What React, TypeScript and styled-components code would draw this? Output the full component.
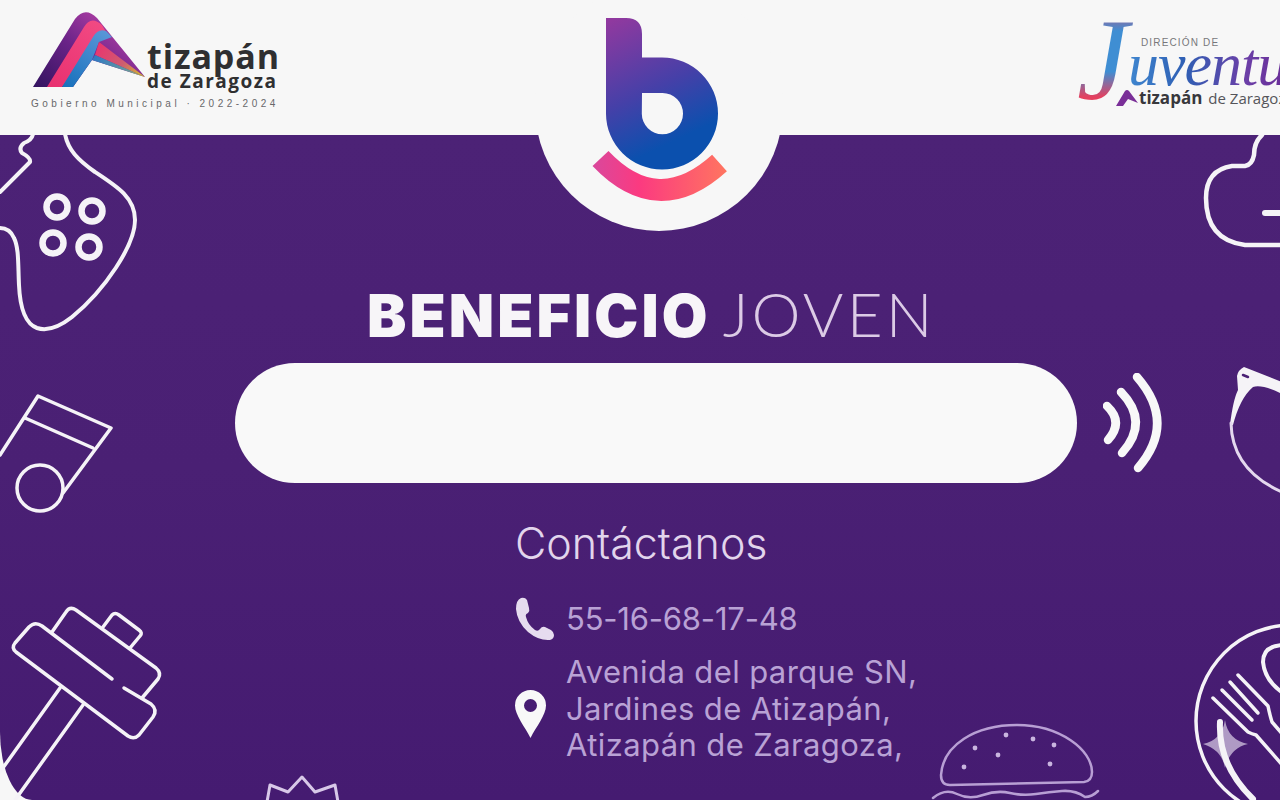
import React from "react";
import styled, { createGlobalStyle } from "styled-components";

const GlobalStyle = createGlobalStyle`
  html, body {
    margin: 0;
    padding: 0;
    background: #f7f7f7;
  }
`;

const Page = styled.div`
  position: relative;
  width: 1280px;
  height: 800px;
  overflow: hidden;
  background: #f7f7f7;
  font-family: "Inter", "Liberation Sans", sans-serif;
`;

// header
const Header = styled.header`
  position: relative;
  z-index: 2;
  display: flex;
  justify-content: space-between;
  height: 135px;
`;
const CityLogo = styled.div`
  display: flex;
  flex-direction: column;
  width: 250px;
  margin-left: 31px;
  padding-top: 11px;
`;
const CityRow = styled.div`
  display: flex;
  gap: 2px;
`;
const CityMark = styled.svg`
  flex: none;
  margin-left: 2px;
`;
const CityName = styled.div`
  display: flex;
  flex-direction: column;
  padding-top: 29px;
  color: #2f2f31;
  font-family: "Open Sans", sans-serif;
  font-weight: 700;
  white-space: nowrap;
`;
const CityTitle = styled.span`
  font-size: 34px;
  line-height: 32px;
  letter-spacing: 0.9px;
`;
const CitySub = styled.span`
  font-size: 19px;
  line-height: 18px;
  letter-spacing: 1.5px;
`;
const CityTag = styled.span`
  margin-top: 8px;
  color: #68686a;
  font-family: "Liberation Sans", sans-serif;
  font-size: 10px;
  line-height: 12px;
  letter-spacing: 3.5px;
  white-space: nowrap;
`;
const Notch = styled.div`
  position: absolute;
  top: -17px;
  left: 535px;
  box-sizing: border-box;
  width: 248px;
  height: 248px;
  padding: 34px 0 0 55px;
  border-radius: 50%;
  background: #f7f7f7;
`;
const YouthLogo = styled.div`
  position: relative;
  width: 202px;
  height: 135px;
  overflow: hidden;
`;
const YouthLabel = styled.span`
  position: absolute;
  top: 37px;
  left: 63px;
  color: #77777b;
  font-family: "Liberation Sans", sans-serif;
  font-size: 10px;
  line-height: 12px;
  letter-spacing: 1.15px;
`;
const YouthInitial = styled.span`
  position: absolute;
  top: 2px;
  left: -1px;
  padding-right: 24px;
  font-family: "Liberation Serif", serif;
  font-size: 116px;
  font-style: italic;
  line-height: 116px;
  background: linear-gradient(180deg, #e2476a 0%, #3f8ed3 25%, #3f8ed3 60%, #e5405f 82%);
  background-clip: text;
  color: transparent;
`;
const YouthWord = styled.span`
  position: absolute;
  top: 33px;
  left: 50px;
  font-family: "Liberation Serif", serif;
  font-size: 62px;
  font-style: italic;
  line-height: 62px;
  letter-spacing: -1px;
  white-space: nowrap;
  background: linear-gradient(90deg, #3f86cf 0%, #2f5fb4 30%, #6b3fa7 62%, #6a2f99 82%, #4aa34a 96%);
  background-clip: text;
  color: transparent;
`;
const YouthCity = styled.div`
  position: absolute;
  top: 88px;
  left: 38px;
  display: flex;
  align-items: center;
  gap: 1px;
  color: #38383c;
  font-family: "Open Sans", sans-serif;
  font-size: 17px;
  line-height: 20px;
  white-space: nowrap;
`;
const YouthCityBold = styled.b`
  font-weight: 700;
  margin-right: 5px;
`;
const YouthCityLight = styled.span`
  font-size: 15px;
  color: #55555a;
`;

// main
const Main = styled.main`
  position: relative;
  height: 665px;
  background: linear-gradient(180deg, #4c2276 0%, #4a2074 50%, #451b71 100%);
  border-bottom-left-radius: 32px 68px;
`;
const Doodles = styled.svg`
  position: absolute;
  top: 0;
  left: 0;
`;
const Content = styled.div`
  position: relative;
  display: flex;
  flex-direction: column;
  padding: 141px 0 0 235px;
`;
const Title = styled.h1`
  display: flex;
  gap: 12px;
  align-items: baseline;
  margin: 0 0 0 132px;
  color: #f7f5f8;
  font-family: "Inter", sans-serif;
  font-size: 59px;
  font-weight: 900;
  line-height: 74px;
  letter-spacing: 3.1px;
  white-space: nowrap;
`;
const TitleLight = styled.span`
  color: #dccbe6;
  font-family: "Lato", sans-serif;
  font-weight: 300;
  font-size: 62px;
  letter-spacing: 3.2px;
`;
const CardRow = styled.div`
  display: flex;
  align-items: center;
  gap: 26px;
  margin-top: 10px;
`;
const CardSlot = styled.div`
  width: 842px;
  height: 120px;
  border-radius: 60px;
  background: #f9f9f9;
`;
const Contact = styled.section`
  display: flex;
  flex-direction: column;
  margin: 37px 0 0 280px;
`;
const ContactTitle = styled.h2`
  margin: 0;
  color: #e2d5ec;
  font-size: 43px;
  font-weight: 300;
  line-height: 46px;
`;
const ContactRow = styled.div`
  display: flex;
  align-items: center;
  gap: 12px;
  margin-top: ${(p: { $gap: number }) => p.$gap}px;
`;
const IconSlot = styled.div`
  display: flex;
  flex: none;
  width: 39px;
  padding-top: ${(p: { $top: number }) => p.$top}px;
`;
const ContactText = styled.p`
  margin: 0;
  color: #b9a2d5;
  font-size: 31px;
  font-weight: 400;
  line-height: 36.5px;
  letter-spacing: ${(p: { $tracking: number }) => p.$tracking}px;
  white-space: nowrap;
`;

const MiniA = () => (
  <svg width="22" height="16" viewBox="0 0 22 16">
    <path d="M0 16 L9 1 Q11 -1 13 1 L22 13 L12 9 L7 16 Z" fill="#7a2f98" />
  </svg>
);

const CityA = () => (
  <CityMark width="112" height="77" viewBox="33 11 112 77">
    <defs>
      <linearGradient id="aBase" x1="33" y1="87" x2="90" y2="12" gradientUnits="userSpaceOnUse">
        <stop offset="0" stopColor="#33135f" />
        <stop offset="0.6" stopColor="#6a2388" />
        <stop offset="1" stopColor="#a2399f" />
      </linearGradient>
      <linearGradient id="aPink" x1="47" y1="87" x2="100" y2="22" gradientUnits="userSpaceOnUse">
        <stop offset="0" stopColor="#e8306f" />
        <stop offset="1" stopColor="#f24a83" />
      </linearGradient>
      <linearGradient id="aBlue" x1="62" y1="87" x2="105" y2="30" gradientUnits="userSpaceOnUse">
        <stop offset="0" stopColor="#1670bb" />
        <stop offset="1" stopColor="#5a97d8" />
      </linearGradient>
      <linearGradient id="aRay" x1="98" y1="45" x2="145" y2="77" gradientUnits="userSpaceOnUse">
        <stop offset="0" stopColor="#e9356f" />
        <stop offset="0.55" stopColor="#cf5d70" />
        <stop offset="1" stopColor="#d8c820" />
      </linearGradient>
      <linearGradient id="aShade" x1="92" y1="60" x2="145" y2="77" gradientUnits="userSpaceOnUse">
        <stop offset="0" stopColor="#2f78c4" />
        <stop offset="0.7" stopColor="#6a9c9a" />
        <stop offset="1" stopColor="#d0c828" />
      </linearGradient>
    </defs>
    <path d="M33 87 L75 19 Q85 6 97 18 L145 77 L92 60 L73 87 Z" fill="url(#aBase)" />
    <path d="M47 87 L84 27 Q91 15 102 25 L106 32 L62 87 Z" fill="url(#aPink)" />
    <path d="M62 87 L93 37 Q98 28 106 31 L112 37 L99 42 L92 60 L73 87 Z" fill="url(#aBlue)" />
    <path d="M99 42 L145 77 L95 55 Z" fill="url(#aRay)" />
    <path d="M95 55 L145 77 L92 60 Z" fill="url(#aShade)" />
  </CityMark>
);

const BeneficioLogo = () => (
  <svg width="140" height="186" viewBox="590 17 140 186">
    <defs>
      <linearGradient id="bBody" x1="612" y1="20" x2="680" y2="165" gradientUnits="userSpaceOnUse">
        <stop offset="0" stopColor="#90399f" />
        <stop offset="0.5" stopColor="#4540a8" />
        <stop offset="0.85" stopColor="#0b50ae" />
      </linearGradient>
      <linearGradient id="bSmile" x1="592" y1="170" x2="727" y2="170" gradientUnits="userSpaceOnUse">
        <stop offset="0" stopColor="#d9489d" />
        <stop offset="0.35" stopColor="#fb3a80" />
        <stop offset="1" stopColor="#ff7560" />
      </linearGradient>
    </defs>
    <path
      fillRule="evenodd"
      d="M606 18 H626 Q642 18 642 34 V57.5 H662 A56 56 0 1 1 606 113.7 Z M642 93 H662.5 A20.6 20.6 0 1 1 641.8 113.7 Z"
      fill="url(#bBody)"
    />
    <path d="M600.5 158.5 Q658 219 719.5 163" fill="none" stroke="url(#bSmile)" strokeWidth="22" />
  </svg>
);

const NfcWaves = () => (
  <svg width="60" height="100" viewBox="1103 373 60 100" fill="none" stroke="#f8f8f8" strokeWidth="8.5" strokeLinecap="round">
    <path d="M1107 406 Q1124 422 1108 440" />
    <path d="M1121 392 Q1150 422 1122 453" />
    <path d="M1137 377 Q1177 423 1138 468" />
  </svg>
);

const PhoneIcon = () => (
  <svg width="39" height="44" viewBox="0 0 39 44">
    <path
      d="M6 1 Q1 3 1 12 Q2 25 13 35 Q24 44 35 43 Q39 42 39 38 Q39 35 36 33 L30 30 Q27 29 25 32 Q23 35 20 33 Q13 28 11 20 Q10 17 13 16 Q15 14 14 11 L12 3 Q10 0 6 1 Z"
      fill="#e6dcef"
    />
  </svg>
);

const PinIcon = () => (
  <svg width="31" height="48" viewBox="0 0 31 48">
    <path
      fillRule="evenodd"
      d="M15.5 0 A15.5 15.5 0 0 1 31 15.5 C31 25 21 37 15.5 48 C10 37 0 25 0 15.5 A15.5 15.5 0 0 1 15.5 0 Z M15.5 9 A6.5 6.5 0 1 0 15.5 22 A6.5 6.5 0 1 0 15.5 9 Z"
      fill="#f8f8f8"
    />
  </svg>
);

// outline drawings scattered over the card, in page coordinates
const CardDoodles = () => (
  <Doodles width="1280" height="665" viewBox="0 135 1280 665" fill="none" stroke="#f5f3f7" strokeLinecap="round" strokeLinejoin="round">
    {/* game pad */}
    <g strokeWidth="4">
      <path d="M65 134 C68 150 78 160 95 172 C118 187 135 198 135 220 C135 245 105 290 72 317 C58 328 46 331 37 328 C26 324 20 308 19 285 C18 265 19 248 14 238 C11 231 6 228 0 228" />
      <path d="M33 134 Q32 140 24 143 Q18 148 22 153 Q31 158 30 162 L0 192" />
    </g>
    <g strokeWidth="6.5">
      <circle cx="57" cy="207" r="10.5" />
      <circle cx="92" cy="211" r="10.5" />
      <circle cx="53" cy="243" r="10.5" />
      <circle cx="89" cy="247" r="10.5" />
    </g>
    {/* music note */}
    <g strokeWidth="3.5">
      <path d="M0 455 L38 396 L111 428 L63 493" />
      <path d="M25 418 L93 448" />
      <circle cx="40" cy="488" r="23" />
    </g>
    {/* hammer */}
    <g strokeWidth="3.5">
      <path d="M112 679 L42 626 Q35 621 29 627 L15 643 Q11 648 16 652 L128 736 Q134 740 139 735 L153 717 Q158 710 151 704 L124 688" />
      <path d="M52 632 L66 612 Q70 606 76 610 L156 668 Q162 673 158 679 L142 698" />
      <path d="M103 627 L112 615 Q115 612 119 615 L139 630 Q143 633 140 636 L130 648" />
      <path d="M60 688 L0 772" />
      <path d="M83 705 L15 800" />
    </g>
    {/* crown */}
    <path d="M267 802 L270 785 L288 792 L302 777 L315 792 L335 785 L338 802" stroke="#d8c8e8" strokeWidth="3" />
    {/* burger */}
    <g stroke="#b89fd4" strokeWidth="2.5">
      <path d="M941 775 C943 745 975 725 1017 725 C1060 725 1092 750 1092 772 Q1092 781 1084 782 L950 785 Q941 785 941 775 Z" />
      <path d="M933 798 Q945 788 957 794 T983 795 T1010 793 T1036 794 T1062 791 T1085 797 Q1092 797 1098 791" />
      <g fill="#c9b5df" stroke="none">
        <circle cx="1006" cy="735" r="2.4" />
        <circle cx="1033" cy="739" r="2.4" />
        <circle cx="1054" cy="745" r="2.4" />
        <circle cx="975" cy="748" r="2.4" />
        <circle cx="998" cy="755" r="2.4" />
        <circle cx="964" cy="767" r="2.4" />
        <circle cx="1050" cy="764" r="2.4" />
      </g>
    </g>
    {/* top right bubble */}
    <g strokeWidth="4.5">
      <path d="M1262 135 Q1254 142 1254 155 Q1252 165 1245 166 L1232 166 Q1206 170 1206 198 Q1206 240 1245 245 L1282 245" />
      <path d="M1265 213 L1282 213" strokeWidth="6" />
    </g>
    {/* ring top right */}
    <path d="M1237 376 Q1238 370 1244 367 L1282 382 L1282 394 Q1262 384 1253 387 Q1240 398 1233 425 L1230 425 Q1233 400 1238 390 Z" fill="#f5f3f7" stroke="none" />
    <path d="M1243 375 L1248 377" stroke="#4b2175" strokeWidth="2.5" />
    <path d="M1231 423 Q1232 470 1282 492" stroke="#e4d8ee" strokeWidth="3" />
    {/* sparkle under the plate line */}
    <path d="M1225 720 Q1228 740 1248 744 Q1230 748 1225 768 Q1222 750 1203 744 Q1222 740 1225 720 Z" fill="#c9bad9" fillOpacity="0.8" stroke="none" />
    {/* plate and cutlery */}
    <circle cx="1292" cy="721" r="96" strokeWidth="3.5" />
    <path d="M1220 722 Q1218 765 1253 799" strokeWidth="6" />
    <g strokeWidth="3.5">
      <path d="M1213 698 L1248 732 Q1252 734 1256 735 L1285 768" />
      <path d="M1238 675 L1268 706 Q1270 716 1272 722 L1285 737" />
      <path d="M1222 690 L1252 720" />
      <path d="M1230 682 L1258 713" />
      <path d="M1285 645 Q1263 645 1263 662 Q1265 682 1285 694" strokeWidth="4" />
    </g>
  </Doodles>
);

const App = () => {
  return (
    <Page>
      <GlobalStyle />

      <Header>
        <CityLogo>
          <CityRow>
            <CityA />
            <CityName>
              <CityTitle>tizapán</CityTitle>
              <CitySub>de Zaragoza</CitySub>
            </CityName>
          </CityRow>
          <CityTag>Gobierno Municipal · 2022-2024</CityTag>
        </CityLogo>

        <Notch>
          <BeneficioLogo />
        </Notch>

        <YouthLogo>
          <YouthInitial>J</YouthInitial>
          <YouthWord>uventud</YouthWord>
          <YouthLabel>DIRECIÓN DE</YouthLabel>
          <YouthCity>
            <MiniA />
            <YouthCityBold>tizapán</YouthCityBold>
            <YouthCityLight>de Zaragoza</YouthCityLight>
          </YouthCity>
        </YouthLogo>
      </Header>

      <Main>
        <CardDoodles />
        <Content>
          <Title>
            BENEFICIO
            <TitleLight>JOVEN</TitleLight>
          </Title>

          <CardRow>
            <CardSlot />
            <NfcWaves />
          </CardRow>

          <Contact>
            <ContactTitle>Contáctanos</ContactTitle>
            <ContactRow $gap={31}>
              <IconSlot $top={0}>
                <PhoneIcon />
              </IconSlot>
              <ContactText $tracking={-0.2}>55-16-68-17-48</ContactText>
            </ContactRow>
            <ContactRow $gap={13}>
              <IconSlot $top={10}>
                <PinIcon />
              </IconSlot>
              <ContactText $tracking={0.4}>
                Avenida del parque SN,
                <br />
                Jardines de Atizapán,
                <br />
                Atizapán de Zaragoza,
              </ContactText>
            </ContactRow>
          </Contact>
        </Content>
      </Main>
    </Page>
  );
};

export default App;
